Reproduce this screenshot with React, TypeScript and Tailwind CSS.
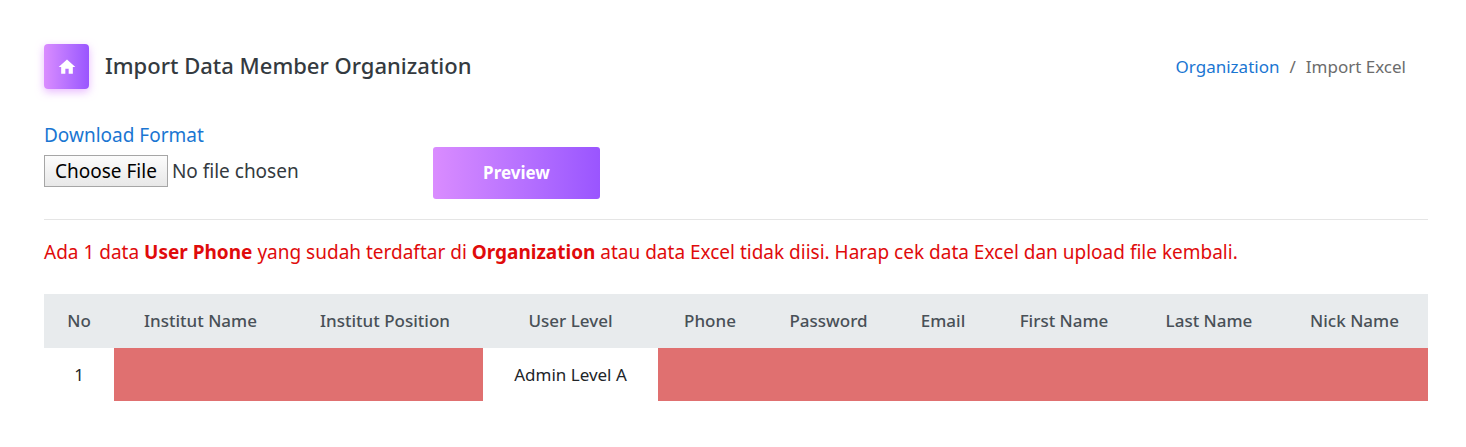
import React from 'react';
import { MdHome } from 'react-icons/md';

interface Column {
  label: string;
  width: string;
}

interface Cell {
  value: string;
  invalid: boolean;
}

const COLUMNS: Column[] = [
  { label: 'No', width: 'w-[70px]' },
  { label: 'Institut Name', width: 'w-[173px]' },
  { label: 'Institut Position', width: 'w-[196px]' },
  { label: 'User Level', width: 'w-[175px]' },
  { label: 'Phone', width: 'w-[104px]' },
  { label: 'Password', width: 'w-[133px]' },
  { label: 'Email', width: 'w-[96px]' },
  { label: 'First Name', width: 'w-[146px]' },
  { label: 'Last Name', width: 'w-[144px]' },
  { label: 'Nick Name', width: 'w-[147px]' },
];

const ROWS: Cell[][] = [
  ['1', '', '', 'Admin Level A', '', '', '', '', '', ''].map((value) => ({
    value,
    invalid: value === '',
  })),
];

const PageHeader: React.FC = () => (
  <header className="flex items-center justify-between pr-[22px]">
    <div className="flex items-center gap-4">
      <span className="flex size-[45px] items-center justify-center rounded-sm bg-linear-to-r from-[#da8cff] to-[#9a55ff] text-white shadow-[0_3px_8px_rgba(218,140,255,0.6)]">
        <MdHome className="size-5" />
      </span>
      <h1 className="pb-[3px] text-[22px] leading-7 font-medium text-[#343a40]">Import Data Member Organization</h1>
    </div>
    <nav aria-label="breadcrumb">
      <ol className="flex gap-2.5 text-[17px] leading-6 text-[#6c6c6c]">
        <li>
          <a href="#organization" className="text-[#1a76d2]">Organization</a>
        </li>
        <li aria-hidden="true">/</li>
        <li aria-current="page">Import Excel</li>
      </ol>
    </nav>
  </header>
);

const UploadForm: React.FC = () => (
  <form className="mt-[31px] flex items-end" onSubmit={(e) => e.preventDefault()}>
    <div className="mb-3 w-[389px] text-[19px]">
      <a href="#format" className="block leading-[30px] text-[#1a76d2]">Download Format</a>
      <input
        type="file"
        aria-label="Excel file"
        className="mt-[5px] block w-full leading-6 text-[#343a40] file:mr-1 file:h-8 file:border file:border-solid file:border-[#a6a6a6] file:bg-linear-to-b file:from-[#fcfcfc] file:to-[#e8e8e8] file:px-2.5 file:text-black"
      />
    </div>
    <button
      type="submit"
      className="h-[52px] w-[167px] rounded-[3px] bg-linear-to-r from-[#da8cff] to-[#9a55ff] text-[17px] font-bold text-white"
    >
      Preview
    </button>
  </form>
);

const PreviewTable: React.FC = () => (
  <table className="mt-[27px] w-full table-fixed text-center text-[17px] leading-6">
    <thead className="bg-[#e8ebed] text-[#495057]">
      <tr className="h-[54px]">
        {COLUMNS.map((col) => (
          <th key={col.label} scope="col" className={`${col.width} font-medium whitespace-nowrap`}>
            {col.label}
          </th>
        ))}
      </tr>
    </thead>
    <tbody className="text-[#212529]">
      {ROWS.map((row, i) => (
        <tr key={i} className="h-[53px]">
          {row.map((cell, j) => (
            <td key={j} className={cell.invalid ? 'bg-[#e07070]' : 'whitespace-nowrap'}>
              {cell.value}
            </td>
          ))}
        </tr>
      ))}
    </tbody>
  </table>
);

const App: React.FC = () => {
  return (
    <main className="bg-white pt-11 pr-[38px] pb-11 pl-11 font-['Noto_Sans',sans-serif]">
      <PageHeader />
      <UploadForm />
      <hr className="mt-5 border-[#e5e5e5]" />
      <p className="mt-[17px] text-[19px] leading-[30px] text-[#e00b0b]">
        Ada 1 data <b>User Phone</b> yang sudah terdaftar di <b>Organization</b> atau data Excel tidak diisi. Harap cek
        data Excel dan upload file kembali.
      </p>
      <PreviewTable />
    </main>
  );
};

export default App;
